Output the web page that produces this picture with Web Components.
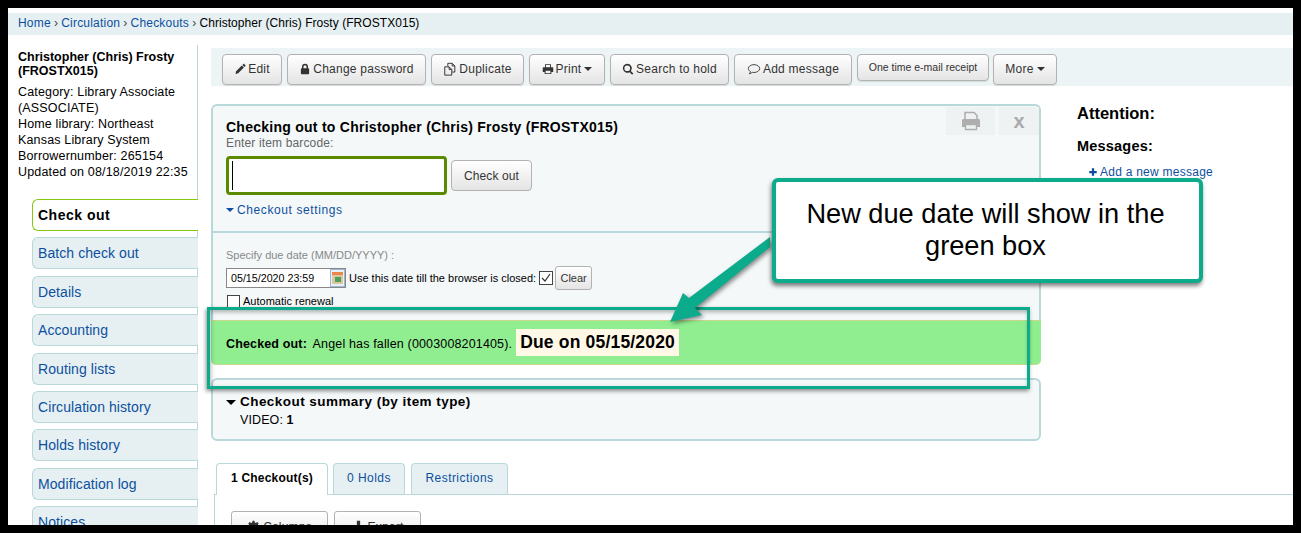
<!DOCTYPE html>
<html>
<head>
<meta charset="utf-8">
<title>Checking out to Christopher (Chris) Frosty</title>
<style>
    html, body { margin: 0; padding: 0; background: #000; }
    body { padding: 8px; width: 1285px; height: 517px; overflow: hidden; font-family: "Liberation Sans", Arial, sans-serif; }
</style>
</head>
<body>
<koha-page>
    <koha-breadcrumbs slot="top">
        <a>Home</a><i>›</i><a>Circulation</a><i>›</i><a>Checkouts</a><i>›</i><span>Christopher (Chris) Frosty (FROSTX015)</span>
    </koha-breadcrumbs>
    <patron-aside slot="aside">
        <patron-info></patron-info>
        <nav-item active>Check out</nav-item>
        <nav-item>Batch check out</nav-item>
        <nav-item>Details</nav-item>
        <nav-item>Accounting</nav-item>
        <nav-item>Routing lists</nav-item>
        <nav-item>Circulation history</nav-item>
        <nav-item>Holds history</nav-item>
        <nav-item>Modification log</nav-item>
        <nav-item>Notices</nav-item>
    </patron-aside>
    <patron-toolbar slot="main">
        <tool-button icon="pencil" w="60">Edit</tool-button>
        <tool-button icon="lock" w="139">Change password</tool-button>
        <tool-button icon="copy" w="93" size="14">Duplicate</tool-button>
        <tool-button icon="print" w="76" caret>Print</tool-button>
        <tool-button icon="search" w="119">Search to hold</tool-button>
        <tool-button icon="comment" w="118" size="14">Add message</tool-button>
        <tool-button w="132" small>One time e-mail receipt</tool-button>
        <tool-button w="64" caret>More</tool-button>
    </patron-toolbar>
    <checkout-area slot="main"></checkout-area>
    <circ-tabs slot="main"></circ-tabs>
    <callout-layer slot="over"></callout-layer>
</koha-page>

<script>
const ICONS = {
    pencil: '<path d="M2 14.500l.8-3.600 7.600-7.600 2.800 2.800-7.600 7.600zM11.200 2.500l1-1c.5-.5 1.100-.5 1.600 0l1.200 1.200c.5.5.5 1.100 0 1.600l-1 1z"/>',
    lock: '<path fill-rule="evenodd" d="M4 7V5a4 4 0 0 1 8 0v2h.6c.5 0 .9.4.9.9v6.200c0 .5-.4.9-.9.9H3.400a.9.9 0 0 1-.9-.9V7.900c0-.5.4-.9.9-.9zm2 0h4V5a2 2 0 0 0-4 0z"/>',
    copy: '<path fill="none" stroke="currentColor" stroke-width="1.100" d="M5.500 4.500V1.500h5l3 3v7h-3M10.500 1.500v3h3M2 5.500h5l3 3v6.500H2zM7 5.500v3h3"/>',
    print: '<path fill-rule="evenodd" d="M4 1.500h8v4h2.200c.5 0 .8.4.8.8v5c0 .4-.3.7-.8.7H12.500v2.500h-9V12H1.800c-.5 0-.8-.3-.8-.7v-5c0-.4.3-.8.8-.8H4zm1.200 1.200v3h5.600v-3zM4.800 10.200v3.600h6.400v-3.600z"/>',
    search: '<path fill-rule="evenodd" d="M7 1a6 6 0 0 1 4.800 9.600l3.300 3.300-1.600 1.600-3.300-3.300A6 6 0 1 1 7 1zm0 2.200a3.800 3.800 0 1 0 0 7.600 3.800 3.800 0 0 0 0-7.600z"/>',
    comment: '<path fill="none" stroke="currentColor" stroke-width="1" d="M8 3c3.600 0 6.500 2 6.500 4.500S11.600 12 8 12c-.7 0-1.400-.1-2-.2-.9.8-2 1.500-3.500 1.700.8-.7 1.300-1.600 1.400-2.600C2.400 10.100 1.500 8.900 1.500 7.500 1.500 5 4.400 3 8 3z"/>',
    plus: '<path d="M6.200 2h3.600v4.200H14v3.600H9.800V14H6.200V9.800H2V6.200h4.200z"/>',
    gear: '<path fill-rule="evenodd" d="M6.800 1h2.400l.4 2 1.300.6 1.800-1.100 1.700 1.700-1.100 1.800.6 1.300 2 .4v2.400l-2 .4-.6 1.300 1.100 1.800-1.700 1.700-1.800-1.100-1.300.6-.4 2H6.800l-.4-2-1.300-.6-1.800 1.100-1.700-1.700 1.100-1.800-.6-1.300-2-.4V7.700l2-.4.6-1.300-1.100-1.800 1.700-1.700 1.800 1.100 1.300-.6zM8 6a2.500 2.500 0 1 0 0 5 2.500 2.500 0 0 0 0-5z"/>',
    download: '<path d="M6 1h4v6h3.500L8 12.500 2.500 7H6zM1 13h14v2.500H1z"/>'
}

function icon(name, size) {
    return `<svg viewBox="0 0 16 16" width="${size}" height="${size}" fill="currentColor" aria-hidden="true">${ICONS[name]}</svg>`
}

class KohaPage extends HTMLElement {
    constructor() {
        super()
        const shadowRoot = this.attachShadow({ mode: 'open' })
        shadowRoot.innerHTML = `
            <style>
                :host { display: block; position: relative; width: 1285px; height: 517px; overflow: hidden; background: #fff; color: #000; font: 12px "Liberation Sans", Arial, sans-serif; }
                .cols { display: flex; padding-top: 10px; }
                .main { flex: 1; min-width: 0; padding-left: 13px; }
            </style>
            <slot name="top"></slot>
            <div class="cols">
                <slot name="aside"></slot>
                <div class="main"><slot name="main"></slot></div>
            </div>
            <slot name="over"></slot>
        `
    }
}
customElements.define('koha-page', KohaPage)

class KohaBreadcrumbs extends HTMLElement {
    constructor() {
        super()
        const shadowRoot = this.attachShadow({ mode: 'open' })
        shadowRoot.innerHTML = `
            <style>
                :host { display: block; margin-top: 5px; height: 22px; line-height: 20px; padding-left: 10px; background: #e6f0f2; font-size: 12px; letter-spacing: .05px; white-space: nowrap; }
                ::slotted(a) { color: #0d4f9e; letter-spacing: .2px; }
                ::slotted(i) { font-style: normal; color: #444; margin: 0 3.200px; }
            </style>
            <slot></slot>
        `
    }
}
customElements.define('koha-breadcrumbs', KohaBreadcrumbs)

class PatronAside extends HTMLElement {
    constructor() {
        super()
        const shadowRoot = this.attachShadow({ mode: 'open' })
        shadowRoot.innerHTML = `
            <style>
                :host { display: flex; flex-direction: column; box-sizing: border-box; width: 190px; height: 480px; flex: none; border-right: 1px solid #b9d8d9; }
            </style>
            <slot></slot>
        `
    }
}
customElements.define('patron-aside', PatronAside)

class PatronInfo extends HTMLElement {
    constructor() {
        super()
        const shadowRoot = this.attachShadow({ mode: 'open' })
        shadowRoot.innerHTML = `
            <style>
                :host { display: block; flex: none; height: 154px; padding: 5px 6px 0 10px; box-sizing: border-box; }
                h5 { margin: 0 0 6px; font-size: 12.500px; line-height: 14px; }
                div { font-size: 12.500px; line-height: 16px; letter-spacing: .16px; }
            </style>
            <h5>Christopher (Chris) Frosty (FROSTX015)</h5>
            <div>Category: Library Associate (ASSOCIATE)</div>
            <div>Home library: Northeast Kansas Library System</div>
            <div>Borrowernumber: 265154</div>
            <div>Updated on 08/18/2019 22:35</div>
        `
    }
}
customElements.define('patron-info', PatronInfo)

class NavItem extends HTMLElement {
    constructor() {
        super()
        const shadowRoot = this.attachShadow({ mode: 'open' })
        shadowRoot.innerHTML = `
            <style>
                :host { display: flex; align-items: center; flex: none; box-sizing: border-box; height: 32px; margin: 0 -1px 6.400px 24px; padding-left: 5px; border: 1px solid #b9d8d9; border-right: 0; border-radius: 6px 0 0 6px; background: #e6f0f2; color: #0d4f9e; font-size: 14px; letter-spacing: .08px; }
                :host([active]) { background: #fff; color: #000; font-weight: bold; border-color: #85ca11; letter-spacing: .5px; }
            </style>
            <slot></slot>
        `
    }
}
customElements.define('nav-item', NavItem)

class PatronToolbar extends HTMLElement {
    constructor() {
        super()
        const shadowRoot = this.attachShadow({ mode: 'open' })
        shadowRoot.innerHTML = `
            <style>
                :host { display: flex; gap: 5px; box-sizing: border-box; height: 38px; margin-top: 3px; padding: 6px 0 0 11px; background: #edf4f6; }
            </style>
            <slot></slot>
        `
    }
}
customElements.define('patron-toolbar', PatronToolbar)

class ToolButton extends HTMLElement {
    constructor() {
        super()
        const shadowRoot = this.attachShadow({ mode: 'open' })
        const name = this.getAttribute('icon')
        const w = this.getAttribute('w')
        const size = this.getAttribute('size') || 12
        shadowRoot.innerHTML = `
            <style>
                :host { display: inline-flex; align-items: center; justify-content: center; gap: 2px; flex: none; box-sizing: border-box; height: 31px; padding-bottom: 2px; border: 1px solid #b2b2b2; border-radius: 4px; background: linear-gradient(#fff, #e4e4e4); color: #333; font-size: 12px; letter-spacing: .25px; box-shadow: 0 1px 1px rgba(0,0,0,.1); white-space: nowrap; width: ${w}px; }
                :host([small]) { height: 27px; font-size: 10.500px; letter-spacing: 0; margin-right: -1px; }
                svg { display: block; flex: none; }
                .caret { width: 0; height: 0; border: 4px solid transparent; border-top-color: #333; border-bottom: 0; margin-left: 1px; }
            </style>
            ${name ? icon(name, size) : ''}<slot></slot>${this.hasAttribute('caret') ? '<span class="caret"></span>' : ''}
        `
    }
}
customElements.define('tool-button', ToolButton)

class CheckoutArea extends HTMLElement {
    constructor() {
        super()
        const shadowRoot = this.attachShadow({ mode: 'open' })
        shadowRoot.innerHTML = `
            <style>
                :host { display: flex; margin-top: 18px; }
                .col { width: 830px; flex: none; }
                .side { padding: 0 0 0 36px; }
                .side h3 { margin: 0; font-size: 16.500px; line-height: 18px; }
                .side h4 { margin: 15px 0 0; font-size: 14.500px; line-height: 18px; letter-spacing: .2px; }
                .side a { display: flex; align-items: center; gap: 2px; margin: 10px 0 0 11px; color: #0d4f9e; letter-spacing: .25px; }
                .side svg { color: #0d4f9e; }
                .panel { position: relative; box-sizing: border-box; border: 2px solid #b9d8d9; border-bottom: 0; border-radius: 6px 6px 0 0; background: #f4f8f9; height: 216px; }
                .top { box-sizing: border-box; height: 127px; padding: 13px 0 0 13px; border-bottom: 2px solid #b9d8d9; }
                h2 { margin: 0; font-size: 14px; line-height: 16px; letter-spacing: .26px; }
                .hint { color: #666; line-height: 16px; letter-spacing: .15px; }
                .scan { display: flex; align-items: center; gap: 4px; margin-top: 5px; }
                .barcode { position: relative; box-sizing: border-box; width: 221px; height: 39px; background: #fff; border: 3px solid #5a8a00; border-radius: 4px; }
                .barcode::after { content: ""; position: absolute; left: 3px; top: 2px; bottom: 2px; width: 1px; background: #000; }
                .go { box-sizing: border-box; width: 81px; height: 31px; display: flex; align-items: center; justify-content: center; border: 1px solid #b2b2b2; border-radius: 4px; background: linear-gradient(#fff, #e4e4e4); color: #333; letter-spacing: .1px; }
                .settings { display: flex; align-items: center; gap: 3px; margin-top: 7px; color: #0d4f9e; line-height: 16px; letter-spacing: .6px; }
                .down { width: 0; height: 0; border: 4px solid transparent; border-top-color: #0d4f9e; border-bottom: 0; }
                .due { padding: 15px 0 0 13px; }
                .due .hint { font-size: 11px; letter-spacing: 0; color: #888; line-height: 14px; }
                .row { display: flex; align-items: center; height: 24px; margin-top: 4px; font-size: 11px; letter-spacing: 0; }
                .date { position: relative; box-sizing: border-box; width: 120px; height: 20px; border: 1px solid #888; background: #fff; padding-left: 4px; line-height: 18px; font-size: 10.700px; margin-right: 3px; }
                .cal { position: absolute; right: 0; top: 0; width: 15px; height: 18px; box-sizing: border-box; background: #e8f0f8; border: 1px solid #9bb6d6; }
                .cal svg { display: block; width: 13px; height: 16px; }
                .box { box-sizing: border-box; width: 14px; height: 14px; border: 1px solid #444; background: #fff; margin: 0 2px 0 3px; flex: none; }
                .box svg { display: block; }
                .clear { box-sizing: border-box; width: 37px; height: 24px; display: flex; align-items: center; justify-content: center; border: 1px solid #b2b2b2; border-radius: 3px; background: linear-gradient(#fff, #e4e4e4); color: #333; font-size: 11px; }
                .auto { display: flex; align-items: center; height: 14px; margin-top: 4px; font-size: 11px; line-height: 12px; }
                .auto .box { width: 13px; height: 13px; margin: 0 3px 0 1px; }
                .corner { position: absolute; top: 1px; right: 0; display: flex; gap: 4px; }
                .corner div { box-sizing: border-box; height: 28px; background: #eef2f3; display: flex; align-items: center; justify-content: center; }
                .corner .p { width: 49px; }
                .corner .x { width: 40px; color: #aaa; font: bold 20px "Liberation Sans", Arial, sans-serif; }
                .ok { box-sizing: border-box; height: 45px; display: flex; align-items: center; padding-left: 15px; background: #90ee90; border-bottom: 1px solid #c8d88c; border-top: 1px solid #c8d88c; border-radius: 0 0 5px 5px; white-space: pre; font-size: 12.500px; letter-spacing: .15px; }
                .ok .msg { margin-top: 3px; }
                .ok .msg b { margin-right: 2px; }
                .ok b.when { display: block; margin-left: 4px; background: #fff8e6; padding: 0 4px; line-height: 27px; font-size: 17.500px; letter-spacing: .18px; }
                .sum { box-sizing: border-box; height: 63px; margin-top: 13px; padding: 14px 0 0 13px; border: 2px solid #b9d8d9; border-radius: 6px; background: #f4f8f9; }
                .sum h3 { display: flex; align-items: center; gap: 4px; margin: 0; font-size: 13.500px; line-height: 16px; letter-spacing: .45px; }
                .sum h3 i { width: 0; height: 0; border: 5px solid transparent; border-top-color: #000; border-bottom: 0; }
                .sum p { margin: 2px 0 0 14px; line-height: 16px; font-size: 12.500px; letter-spacing: .1px; }
            </style>
            <div class="col">
                <div class="panel">
                    <div class="corner">
                        <div class="p"><svg viewBox="0 0 24 24" width="24" height="24"><path d="M6 11V3.500h9l3 3V11" fill="none" stroke="#aeaeae" stroke-width="1.600"/><path d="M3 11.500c0-1 .8-1.500 1.500-1.500h15c.8 0 1.500.5 1.500 1.500V18h-3v-3H6v3H3z" fill="#aeaeae"/><path d="M6.500 15.500h11v5h-11z" fill="#eef2f3" stroke="#aeaeae" stroke-width="1.400"/></svg></div>
                        <div class="x">x</div>
                    </div>
                    <div class="top">
                        <h2>Checking out to Christopher (Chris) Frosty (FROSTX015)</h2>
                        <div class="hint">Enter item barcode:</div>
                        <div class="scan"><div class="barcode"></div><div class="go">Check out</div></div>
                        <div class="settings"><span class="down"></span>Checkout settings</div>
                    </div>
                    <div class="due">
                        <div class="hint">Specify due date (MM/DD/YYYY) :</div>
                        <div class="row">
                            <div class="date">05/15/2020 23:59<span class="cal"><svg viewBox="0 0 13 16"><rect x="1" y="2" width="11" height="3" fill="#e8884a"/><rect x="1" y="5" width="11" height="9" fill="#d9c7a0"/><rect x="4" y="7" width="6" height="5" fill="#4f9e5a"/></svg></span></div>
                            Use this date till the browser is closed:
                            <span class="box"><svg viewBox="0 0 12 12" width="12" height="12"><path d="M2 6l3 3 5-7" fill="none" stroke="#333" stroke-width="1.200"/></svg></span>
                            <span class="clear">Clear</span>
                        </div>
                        <div class="auto"><span class="box"></span>Automatic renewal</div>
                    </div>
                </div>
                <div class="ok"><span class="msg"><b>Checked out: </b>Angel has fallen (0003008201405).</span><b class="when">Due on 05/15/2020</b></div>
                <div class="sum">
                    <h3><i></i>Checkout summary (by item type)</h3>
                    <p>VIDEO: <b>1</b></p>
                </div>
            </div>
            <div class="side">
                <h3>Attention:</h3>
                <h4>Messages:</h4>
                <a>${icon('plus', 10)}Add a new message</a>
            </div>
        `
    }
}
customElements.define('checkout-area', CheckoutArea)

class CircTabs extends HTMLElement {
    constructor() {
        super()
        const shadowRoot = this.attachShadow({ mode: 'open' })
        shadowRoot.innerHTML = `
            <style>
                :host { display: block; margin-top: 22px; }
                .tabs { display: flex; gap: 5px; padding-left: 5px; height: 31px; }
                .tab { box-sizing: border-box; height: 31px; padding-bottom: 2px; display: flex; align-items: center; justify-content: center; border: 1px solid #b9d8d9; border-bottom: 0; border-radius: 4px 4px 0 0; background: #e6f0f2; color: #0d4f9e; letter-spacing: .45px; }
                .tab.on { background: #fff; color: #000; font-weight: bold; position: relative; z-index: 1; height: 32px; padding-bottom: 3px; letter-spacing: .2px; }
                .body { margin: 0 0 0 3px; border-top: 1px solid #b9d8d9; border-left: 1px solid #b9d8d9; padding: 16px 0 0 16px; height: 60px; display: flex; gap: 6px; }
                .tb { box-sizing: border-box; height: 31px; display: flex; align-items: center; justify-content: center; gap: 3px; border: 1px solid #b2b2b2; border-radius: 3px; background: linear-gradient(#fff, #e4e4e4); color: #333; letter-spacing: .2px; }
            </style>
            <div class="tabs">
                <div class="tab on" style="width:112px">1 Checkout(s)</div>
                <div class="tab" style="width:72px">0 Holds</div>
                <div class="tab" style="width:97px;margin-left:1px">Restrictions</div>
            </div>
            <div class="body">
                <div class="tb" style="width:97px">${icon('gear', 13)}Columns</div>
                <div class="tb" style="width:87px">${icon('download', 13)}Export</div>
            </div>
        `
    }
}
customElements.define('circ-tabs', CircTabs)

class CalloutLayer extends HTMLElement {
    constructor() {
        super()
        const shadowRoot = this.attachShadow({ mode: 'open' })
        shadowRoot.innerHTML = `
            <style>
                :host { display: block; position: absolute; inset: 0; pointer-events: none; }
                .frame { position: absolute; left: 199px; top: 299px; width: 823px; height: 82px; box-sizing: border-box; border: 3px solid #0bab8b; box-shadow: -1px 2px 4px rgba(0,0,0,.45), inset 1px 2px 4px rgba(0,0,0,.3); }
                svg { position: absolute; left: 0; top: 0; }
                .note { position: absolute; left: 764px; top: 170px; width: 431px; height: 105px; box-sizing: border-box; display: flex; align-items: center; justify-content: center; text-align: center; padding: 0 32px 2px 28px; background: #fff; border: 4px solid #0bab8b; border-radius: 6px; box-shadow: -1px 3px 4px rgba(0,0,0,.5); font-size: 27.200px; line-height: 32px; color: #000; }
            </style>
            <div class="frame"></div>
            <svg width="1285" height="517">
                <path d="M762 229 L762 239 L687 300 L694 307 L662 314 L675 285 L681 290 Z" fill="#0bab8b" style="filter:drop-shadow(2px 2px 2px rgba(0,0,0,.45))"/>
            </svg>
            <div class="note">New due date will show in the green box</div>
        `
    }
}
customElements.define('callout-layer', CalloutLayer)
</script>
</body>
</html>
